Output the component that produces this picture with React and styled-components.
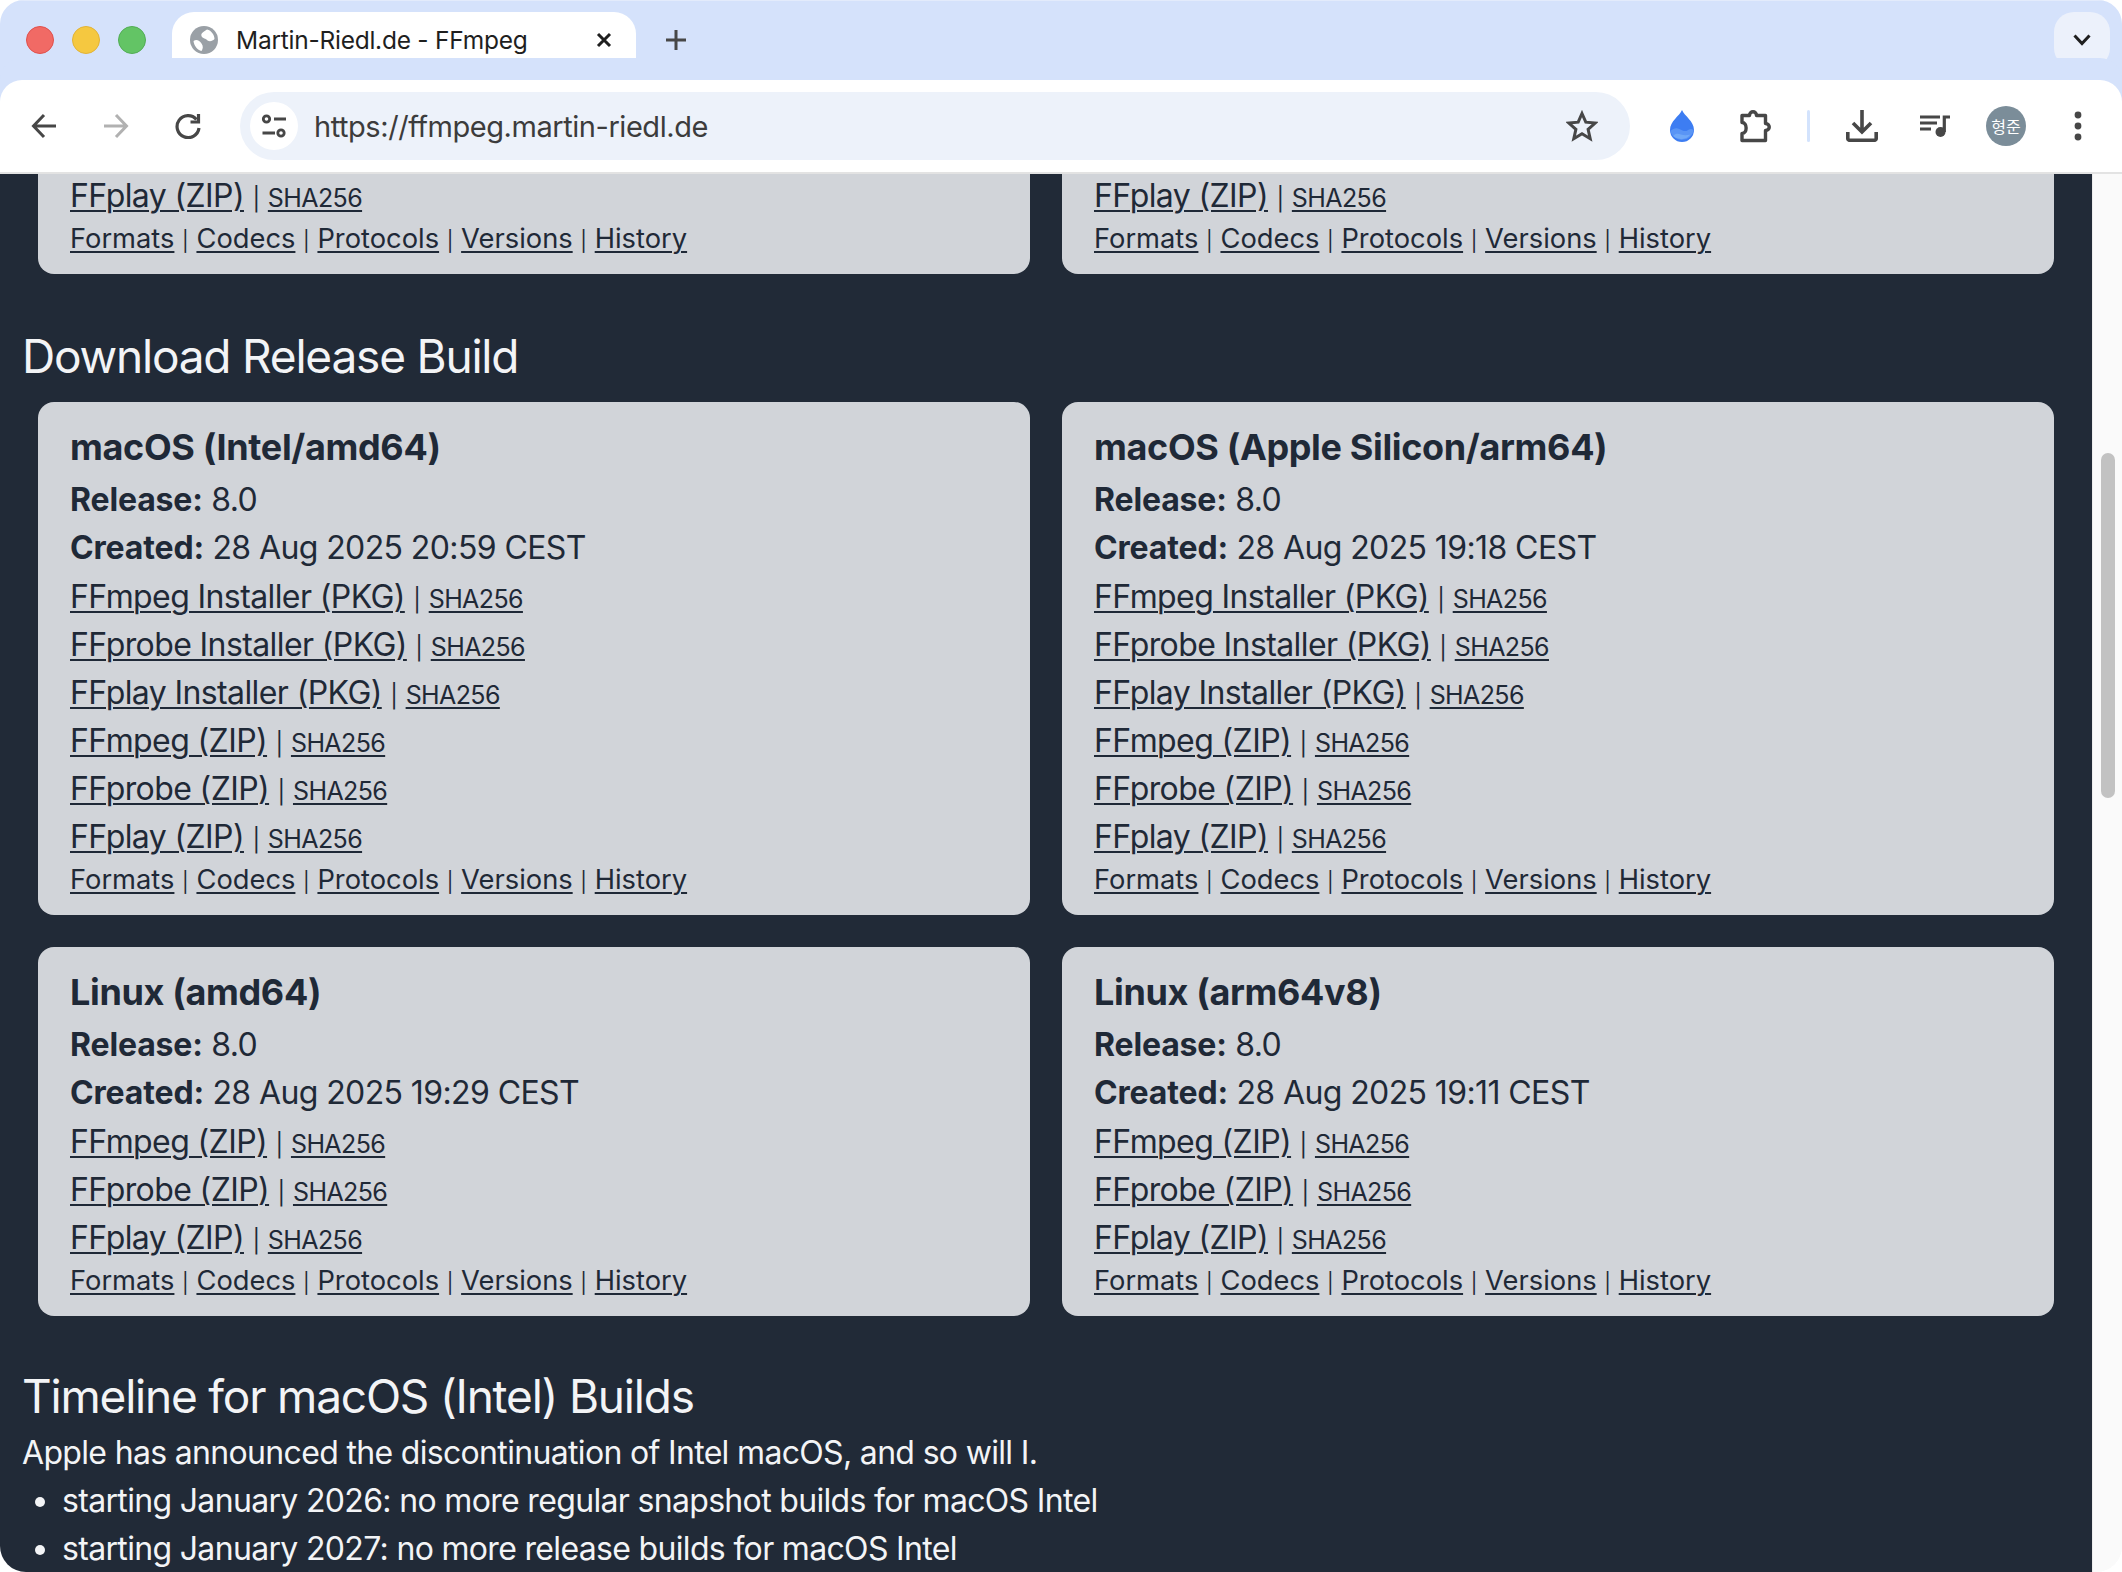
import React from "react";
import styled, { createGlobalStyle } from "styled-components";

const Global = createGlobalStyle`
  html, body { margin: 0; padding: 0; background: #fff; }
  body { font-family: Inter, "Liberation Sans", sans-serif; overflow: hidden; }
  * { box-sizing: border-box; }
`;

const Window = styled.div`
  width: 2122px; height: 1572px; overflow: hidden; border-radius: 24px 24px 26px 26px;
  display: flex; flex-direction: column; background: #fff;
`;
const Strip = styled.div`
  height: 80px; background: #d5e2fb; border-top: 1px solid #e3ebfb; display: flex; align-items: flex-start; padding-top: 11px; position: relative; flex: none;
`;
const Lights = styled.div`
  display: flex; gap: 18px; margin: 14px 26px 0 26px;
`;
const Light = styled.span`
  width: 28px; height: 28px; border-radius: 50%; background: ${p => p.$c}; border: 1px solid ${p => p.$b};
`;
const Tab = styled.div`
  width: 464px; height: 68px; background: #fff; border-radius: 22px 22px 0 0; display: flex; align-items: center;
  padding: 0 0 12px 18px; position: relative; color: #1f1f1f; font-size: 24.5px; letter-spacing: -0.25px;
  &::before, &::after { content: ""; position: absolute; bottom: 0; width: 22px; height: 22px; }
  &::before { left: -22px; background: radial-gradient(circle at 0 0, #d5e2fb 21.5px, #fff 22px); }
  &::after { right: -22px; background: radial-gradient(circle at 100% 0, #d5e2fb 21.5px, #fff 22px); }
`;
const TabTitle = styled.span`
  margin-left: 18px; flex: 1; white-space: nowrap;
`;
const TabClose = styled.span`
  display: flex; margin-right: 23px;
`;
const NewTab = styled.span`
  display: flex; margin: 17px 0 0 29px;
`;
const TabMenu = styled.div`
  position: absolute; right: 12px; top: 11px; width: 56px; height: 56px; border-radius: 20px; background: #ecf1fb;
  display: flex; align-items: center; justify-content: center;
`;
const Toolbar = styled.div`
  height: 94px; background: #fff; border-bottom: 2px solid #e3e3e3; border-radius: 22px 22px 0 0;
  display: flex; align-items: flex-start; padding: 12px 8px 0; flex: none; position: relative; box-shadow: 0 -22px 0 0 #d5e2fb;
`;
const ToolButton = styled.div`
  width: ${p => p.$w || 72}px; height: 68px; display: flex; align-items: center; justify-content: center; flex: none;
`;
const Omnibox = styled.div`
  width: 1390px; height: 68px; margin: 0 16px; background: #edf2fa; border-radius: 34px; display: flex; align-items: center;
  padding: 0 32px 0 10px; flex: none; color: #3c3c3c; font-size: 29px; letter-spacing: -0.45px;
`;
const SiteChip = styled.div`
  width: 48px; height: 48px; border-radius: 50%; background: #fff; display: flex; align-items: center; justify-content: center; flex: none;
`;
const Url = styled.span`
  margin-left: 16px; flex: 1; white-space: nowrap;
`;
const Separator = styled.span`
  width: 3px; height: 32px; border-radius: 2px; background: #d3e3fd;
`;
const Avatar = styled.span`
  width: 40px; height: 40px; border-radius: 50%; background: #7b8d99; color: #fff; font-size: 16px; display: flex; align-items: center; justify-content: center;
  font-family: "Noto Sans CJK KR", Inter, sans-serif;
`;
const Viewport = styled.div`
  flex: 1; display: flex; min-height: 0; background: #fafafa;
`;
const Page = styled.main`
  width: 2092px; flex: none; background: #212a37; overflow: hidden; color: #f3f4f6;
`;
const Scrollbar = styled.div`
  width: 30px; flex: none; background: #fafafa; border-left: 1px solid #ececec; padding: 279px 7px 0 8px;
`;
const Thumb = styled.div`
  height: 345px; border-radius: 8px; background: #c2c2c2;
`;
const Grid = styled.div`
  display: grid; grid-template-columns: 1fr 1fr; gap: 32px; padding: 0 38px;
`;
const Card = styled.section`
  background: #d1d4d9; color: #1f2937; padding: ${p => (p.$clipped ? "0" : "24px")} 32px 16px;
  border-radius: ${p => (p.$clipped ? "0 0 16px 16px" : "16px")};
`;
const CardTitle = styled.h3`
  margin: 0 0 8px; font-size: 36px; line-height: 42px; font-weight: 700; letter-spacing: -0.35px;
`;
const Line = styled.div`
  font-size: 32px; line-height: 48px; white-space: nowrap; letter-spacing: -0.6px;
  margin-top: ${p => p.$top || 0}px;
`;
const Strong = styled.b`
  font-weight: 700; letter-spacing: -0.15px;
`;
const Big = styled.a`
  color: inherit; text-decoration: underline; text-decoration-thickness: 2px; text-underline-offset: 3px;
`;
const Small = styled.a`
  color: inherit; font-size: 25px; line-height: 1; letter-spacing: -0.6px; text-decoration: underline; text-decoration-thickness: 2px; text-underline-offset: 3px;
`;
const Pipe = styled.span`
  font-size: ${p => p.$size}px; line-height: 1;
`;
const Nav = styled.div`
  font-size: 27.3px; line-height: 38px; white-space: nowrap;
`;
const Heading = styled.h2`
  margin: 0; padding: ${p => p.$pad}; font-size: 46px; line-height: 56px; font-weight: 400; color: #f3f4f6; letter-spacing: -1.2px;
`;
const Para = styled.p`
  margin: 0; padding-left: 22px; font-size: 32px; line-height: 48px; letter-spacing: -0.67px;
`;
const List = styled.ul`
  margin: 0; padding: 0 0 0 62px; font-size: 32px; line-height: 48px; letter-spacing: -0.67px;
`;

const P = { fill: "none", stroke: "#474747", strokeWidth: 3.2 };

const Globe = () => (
  <svg width="28" height="28" viewBox="0 0 28 28">
    <circle cx="14" cy="14" r="14" fill="#9aa0a6" />
    <path d="M17 3.500c-3 2-6.500 3.500-5.500 6.500s4.500 2 6 4.500c2.500 1.500 5 .5 7-1.500 0-4-3-8.500-7.500-9.500zM3.500 15c3-2 6-.5 8 2.500s1.500 5 0 7.500c-4-1-7.500-5-8-10z" fill="#fff" />
  </svg>
);
const Close = () => (
  <svg width="18" height="18" viewBox="0 0 18 18"><path d="M3 3l12 12M15 3L3 15" stroke="#1f1f1f" strokeWidth="3" /></svg>
);
const Plus = () => (
  <svg width="22" height="22" viewBox="0 0 22 22"><path d="M11 1v20M1 11h20" stroke="#474747" strokeWidth="3" /></svg>
);
const Chevron = () => (
  <svg width="18" height="12" viewBox="0 0 18 12"><path d="M1.500 1.500L9 9.500l7.500-8" fill="none" stroke="#1f1f1f" strokeWidth="3" /></svg>
);
const Back = () => (
  <svg width="26" height="26" viewBox="0 0 26 26"><path d="M25 13H3M13 2L2.500 13 13 24" fill="none" stroke="#474747" strokeWidth="3" /></svg>
);
const Forward = () => (
  <svg width="26" height="26" viewBox="0 0 26 26"><path d="M1 13h22M13 2l10.500 11L13 24" fill="none" stroke="#b1b1b1" strokeWidth="3" /></svg>
);
const Reload = () => (
  <svg width="26" height="26" viewBox="0 0 26 26"><path d="M21.500 6.500A11 11 0 1 0 24 15" {...P} /><path d="M23.500 1v8h-8" {...P} /></svg>
);
const Tune = () => (
  <svg width="26" height="24" viewBox="0 0 26 24">
    <circle cx="5.500" cy="5" r="3.200" {...P} strokeWidth="2.800" /><path d="M13 5h12M1.500 19H14" {...P} strokeWidth="3" /><circle cx="20" cy="19" r="3.200" {...P} strokeWidth="2.800" />
  </svg>
);
const Star = () => (
  <svg width="32" height="32" viewBox="0 0 32 32"><path d="M16 3.500l3.800 8.700 9.400.9-7.100 6.300 2.100 9.300-8.200-4.900-8.200 4.900 2.100-9.300-7.100-6.300 9.400-.9z" fill="none" stroke="#474747" strokeWidth="3" strokeLinejoin="miter" /></svg>
);
const Drop = () => (
  <svg width="24" height="32" viewBox="0 0 24 32">
    <path d="M12 0c2.500 6 12 11 12 20a12 12 0 0 1-24 0C0 11 9.500 6 12 0z" fill="#3d7df2" />
    <path d="M.3 21c3.500-3 6-3.500 9-2s6 3 8 1.500 4-2 6.400-.5A12 12 0 0 1 .3 21z" fill="#5a95f5" />
    <path d="M3 26c3-3 5-2.500 8-1.500s6 1 9.500 0A12 12 0 0 1 3 26z" fill="#6fa8f8" />
  </svg>
);
const Puzzle = () => (
  <svg width="34" height="34" viewBox="-1.500 0 34 34">
    <path d="M3.500 6.500H11c0-5 7-5 7 0h9v8c5 0 5 7 0 7v10H3.500v-7c5.500 0 5.500-11 0-11z" fill="none" stroke="#474747" strokeWidth="3.400" strokeLinejoin="round" />
  </svg>
);
const Download = () => (
  <svg width="32" height="32" viewBox="0 0 32 32">
    <path d="M16 0v22M7 13l9 9 9-9" fill="none" stroke="#474747" strokeWidth="3.600" /><path d="M1.800 22v6.500a1.800 1.800 0 0 0 1.800 1.800h24.800a1.800 1.800 0 0 0 1.800-1.800V22" fill="none" stroke="#474747" strokeWidth="3.600" />
  </svg>
);
const Queue = () => (
  <svg width="32" height="22" viewBox="-2 0 32 22">
    <path d="M0 2h20M0 8h17M0 14h11" stroke="#474747" strokeWidth="3.200" /><path d="M24.300 17V2H30" fill="none" stroke="#474747" strokeWidth="3.200" /><circle cx="20.500" cy="17" r="5" fill="#474747" />
  </svg>
);
const Dots = () => (
  <svg width="8" height="32" viewBox="0 0 8 32"><circle cx="4" cy="5" r="3.400" fill="#474747" /><circle cx="4" cy="16" r="3.400" fill="#474747" /><circle cx="4" cy="27" r="3.400" fill="#474747" /></svg>
);

const DL = ({ name, top }) => (
  <Line $top={top}><Big href="#">{name}</Big> <Pipe $size={23}>|</Pipe> <Small href="#">SHA256</Small></Line>
);
const navItems = ["Formats", "Codecs", "Protocols", "Versions", "History"];
const NavRow = () => (
  <Nav>
    {navItems.map((n, i) => (
      <React.Fragment key={n}>
        {i > 0 && <> <Pipe $size={20}>|</Pipe> </>}
        <Big href="#">{n}</Big>
      </React.Fragment>
    ))}
  </Nav>
);
const pkg = ["FFmpeg Installer (PKG)", "FFprobe Installer (PKG)", "FFplay Installer (PKG)"];
const zip = ["FFmpeg (ZIP)", "FFprobe (ZIP)", "FFplay (ZIP)"];

const BuildCard = ({ title, created, items }) => (
  <Card>
    <CardTitle>{title}</CardTitle>
    <Line><Strong>Release:</Strong> 8.0</Line>
    <Line><Strong>Created:</Strong> {created}</Line>
    {items.map((n, i) => <DL key={n} name={n} top={i === 0 ? 1 : 0} />)}
    <NavRow />
  </Card>
);
const ClippedCard = () => (
  <Card $clipped>
    <DL name="FFplay (ZIP)" top={-2} />
    <NavRow />
  </Card>
);

export default function App() {
  return (
    <Window>
      <Global />
      <Strip>
        <Lights>
          <Light $c="#f16a65" $b="#e0504c" />
          <Light $c="#f5c840" $b="#e2b336" />
          <Light $c="#63c465" $b="#52ad55" />
        </Lights>
        <Tab>
          <Globe />
          <TabTitle>Martin-Riedl.de - FFmpeg</TabTitle>
          <TabClose><Close /></TabClose>
        </Tab>
        <NewTab><Plus /></NewTab>
        <TabMenu><Chevron /></TabMenu>
      </Strip>
      <Toolbar>
        <ToolButton><Back /></ToolButton>
        <ToolButton><Forward /></ToolButton>
        <ToolButton><Reload /></ToolButton>
        <Omnibox>
          <SiteChip><Tune /></SiteChip>
          <Url>https://ffmpeg.martin-riedl.de</Url>
          <Star />
        </Omnibox>
        <ToolButton><Drop /></ToolButton>
        <ToolButton><Puzzle /></ToolButton>
        <ToolButton $w={36}><Separator /></ToolButton>
        <ToolButton><Download /></ToolButton>
        <ToolButton><Queue /></ToolButton>
        <ToolButton><Avatar>형준</Avatar></ToolButton>
        <ToolButton><Dots /></ToolButton>
      </Toolbar>
      <Viewport>
        <Page>
          <Grid>
            <ClippedCard />
            <ClippedCard />
          </Grid>
          <Heading $pad="54px 22px 18px">Download Release Build</Heading>
          <Grid>
            <BuildCard title="macOS (Intel/amd64)" created="28 Aug 2025 20:59 CEST" items={[...pkg, ...zip]} />
            <BuildCard title="macOS (Apple Silicon/arm64)" created="28 Aug 2025 19:18 CEST" items={[...pkg, ...zip]} />
            <BuildCard title="Linux (amd64)" created="28 Aug 2025 19:29 CEST" items={zip} />
            <BuildCard title="Linux (arm64v8)" created="28 Aug 2025 19:11 CEST" items={zip} />
          </Grid>
          <Heading $pad="52px 22px 5px">Timeline for macOS (Intel) Builds</Heading>
          <Para>Apple has announced the discontinuation of Intel macOS, and so will I.</Para>
          <List>
            <li>starting January 2026: no more regular snapshot builds for macOS Intel</li>
            <li>starting January 2027: no more release builds for macOS Intel</li>
          </List>
        </Page>
        <Scrollbar><Thumb /></Scrollbar>
      </Viewport>
    </Window>
  );
}
